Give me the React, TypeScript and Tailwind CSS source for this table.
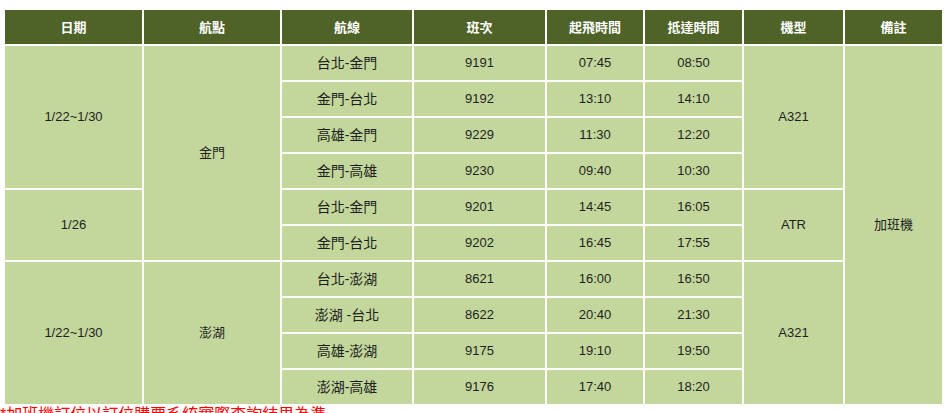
const head = ["日期", "航點", "航線", "班次", "起飛時間", "抵達時間", "機型", "備註"];

const flights = [
  { route: "台北-金門", no: "9191", dep: "07:45", arr: "08:50" },
  { route: "金門-台北", no: "9192", dep: "13:10", arr: "14:10" },
  { route: "高雄-金門", no: "9229", dep: "11:30", arr: "12:20" },
  { route: "金門-高雄", no: "9230", dep: "09:40", arr: "10:30" },
  { route: "台北-金門", no: "9201", dep: "14:45", arr: "16:05" },
  { route: "金門-台北", no: "9202", dep: "16:45", arr: "17:55" },
  { route: "台北-澎湖", no: "8621", dep: "16:00", arr: "16:50" },
  { route: "澎湖 -台北", no: "8622", dep: "20:40", arr: "21:30" },
  { route: "高雄-澎湖", no: "9175", dep: "19:10", arr: "19:50" },
  { route: "澎湖-高雄", no: "9176", dep: "17:40", arr: "18:20" },
];

// merged cells: [rowSpan, text] keyed by starting row
const dates: Record<number, [number, string]> = { 0: [4, "1/22~1/30"], 4: [2, "1/26"], 6: [4, "1/22~1/30"] };
const places: Record<number, [number, string]> = { 0: [6, "金門"], 6: [4, "澎湖"] };
const planes: Record<number, [number, string]> = { 0: [4, "A321"], 4: [2, "ATR"], 6: [4, "A321"] };

const td = "bg-[#c3d69b] h-[34px] p-0 text-center align-middle";

export default function App() {
  return (
    <div className="bg-white w-[951px] h-[413px] overflow-hidden pt-[8px] pl-[3px] text-[13px] text-[#1f1f1f] font-['Liberation_Sans','Noto_Sans_CJK_TC',sans-serif]">
      <table className="border-separate border-spacing-[2px] w-[941px] table-fixed">
        <colgroup>
          <col className="w-[137px]" />
          <col className="w-[136px]" />
          <col className="w-[130px]" />
          <col className="w-[131px]" />
          <col className="w-[96px]" />
          <col className="w-[97px]" />
          <col className="w-[99px]" />
          <col className="w-[97px]" />
        </colgroup>
        <thead>
          <tr>
            {head.map((h) => (
              <th
                key={h}
                className="bg-[#4f6228] h-[34px] p-0 text-center align-middle font-bold text-white text-[13px] font-['Noto_Sans_CJK_TC',sans-serif]"
              >
                {h}
              </th>
            ))}
          </tr>
        </thead>
        <tbody>
          {flights.map((f, i) => (
            <tr key={i}>
              {dates[i] && (
                <td rowSpan={dates[i][0]} className={td}>
                  {dates[i][1]}
                </td>
              )}
              {places[i] && (
                <td rowSpan={places[i][0]} className={td}>
                  {places[i][1]}
                </td>
              )}
              <td className={`${td} text-[14px]`}>{f.route}</td>
              <td className={td}>{f.no}</td>
              <td className={td}>{f.dep}</td>
              <td className={td}>{f.arr}</td>
              {planes[i] && (
                <td rowSpan={planes[i][0]} className={td}>
                  {planes[i][1]}
                </td>
              )}
              {i === 0 && (
                <td rowSpan={10} className={td}>
                  加班機
                </td>
              )}
            </tr>
          ))}
        </tbody>
      </table>
      <p className="-ml-[3px] -mt-[1px] text-[16px] leading-[20px] text-[#ff0000]">
        *加班機訂位以訂位購票系統實際查詢結果為準
      </p>
    </div>
  );
}
